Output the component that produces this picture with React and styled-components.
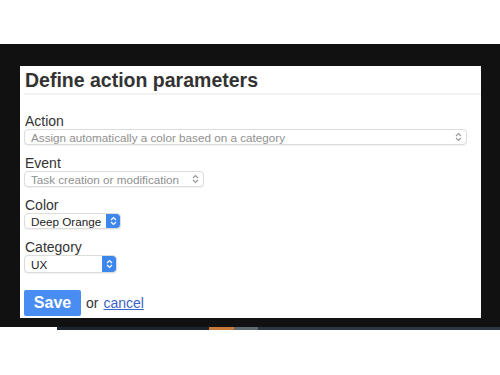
import React from "react";
import styled, { createGlobalStyle } from "styled-components";

const GlobalStyle = createGlobalStyle`
  html, body {
    margin: 0;
    padding: 0;
    background: #ffffff;
  }
  body {
    font-family: "Liberation Sans", Arial, sans-serif;
  }
`;

const Screen = styled.div`
  width: 500px;
  height: 375px;
  background: #fff;
  overflow: hidden;
`;

const TopBand = styled.div`
  height: 44px;
  background: #fff;
`;

const Frame = styled.div`
  height: 283px;
  background: #111111;
  box-sizing: border-box;
  padding: 22px 19px 9px 20px;
  display: flex;
`;

const Strip = styled.div`
  margin-left: 57px;
  height: 3px;
  display: flex;
  background: #2a3846;
`;

const StripPart = styled.div`
  width: ${(p) => p.w}px;
  background: ${(p) => p.color};
`;

const Panel = styled.div`
  flex: 1;
  background: #fff;
  padding: 0 14px 0 4px;
  display: flex;
  flex-direction: column;
`;

const Title = styled.h1`
  margin: 0 -14px 0 0;
  padding: 4px 0 2px 1px;
  font-size: 19.5px;
  line-height: 21px;
  font-weight: bold;
  color: #333;
  border-bottom: 2px solid #f2f2f2;
`;

const Field = styled.div`
  display: flex;
  flex-direction: column;
  align-items: flex-start;
  margin-top: ${(p) => p.top}px;
`;

const Label = styled.label`
  font-size: 14px;
  line-height: 16px;
  color: #333;
  padding-left: 1px;
`;

const SelectBox = styled.div`
  box-sizing: border-box;
  width: ${(p) => (p.full ? "100%" : `${p.w}px`)};
  height: ${(p) => p.h || 16}px;
  border: 1px solid #dcdcdc;
  border-radius: 4px;
  background: #fff;
  display: flex;
  align-items: center;
  font-size: 11.7px;
  color: ${(p) => (p.active ? "#222" : "#909090")};
  box-shadow: 0 1px 1px rgba(0, 0, 0, 0.06);
  overflow: hidden;
`;

const SelectText = styled.span`
  flex: 1;
  padding-left: 6px;
  white-space: nowrap;
`;

const Arrows = styled.span`
  width: ${(p) => (p.blue ? 14 : 16)}px;
  align-self: stretch;
  display: flex;
  align-items: center;
  justify-content: center;
  background: ${(p) => (p.blue ? "#3d86ee" : "transparent")};
  color: ${(p) => (p.blue ? "#fff" : "#999")};
  border-radius: ${(p) => (p.blue ? "0 3px 3px 0" : "0")};
`;

const Chevrons = () => (
  <svg width="7" height="10" viewBox="0 0 7 10" fill="none">
    <path d="M1 4 L3.5 1.5 L6 4" stroke="currentColor" strokeWidth="1.2" />
    <path d="M1 6 L3.5 8.5 L6 6" stroke="currentColor" strokeWidth="1.2" />
  </svg>
);

const Actions = styled.div`
  display: flex;
  align-items: center;
  margin-top: 17px;
  gap: 5px;
`;

const SaveButton = styled.button`
  width: 57px;
  height: 26px;
  border: none;
  border-radius: 2px;
  background: #4a8df2;
  color: #fff;
  font-family: inherit;
  font-size: 16px;
  font-weight: bold;
  padding: 0;
`;

const Or = styled.span`
  font-size: 14px;
  color: #333;
`;

const CancelLink = styled.a`
  font-size: 14px;
  color: #3a63c8;
  text-decoration: underline;
`;

const Select = ({ value, w, h, full, blue }) => (
  <SelectBox w={w} h={h} full={full} active={blue}>
    <SelectText>{value}</SelectText>
    <Arrows blue={blue}>
      <Chevrons />
    </Arrows>
  </SelectBox>
);

export default function App() {
  return (
    <Screen>
      <GlobalStyle />
      <TopBand />
      <Frame>
        <Panel>
          <Title>Define action parameters</Title>
          <Field top={18}>
            <Label>Action</Label>
            <Select full value="Assign automatically a color based on a category" />
          </Field>
          <Field top={10}>
            <Label>Event</Label>
            <Select w={180} value="Task creation or modification" />
          </Field>
          <Field top={10}>
            <Label>Color</Label>
            <Select w={97} blue value="Deep Orange" />
          </Field>
          <Field top={10}>
            <Label>Category</Label>
            <Select w={93} h={18} blue value="UX" />
          </Field>
          <Actions>
            <SaveButton>Save</SaveButton>
            <Or>or</Or>
            <CancelLink href="#">cancel</CancelLink>
          </Actions>
        </Panel>
      </Frame>
      <Strip>
        <StripPart w={152} color="#1d2630" />
        <StripPart w={25} color="#c87a3a" />
        <StripPart w={24} color="#5e6a6e" />
      </Strip>
    </Screen>
  );
}
